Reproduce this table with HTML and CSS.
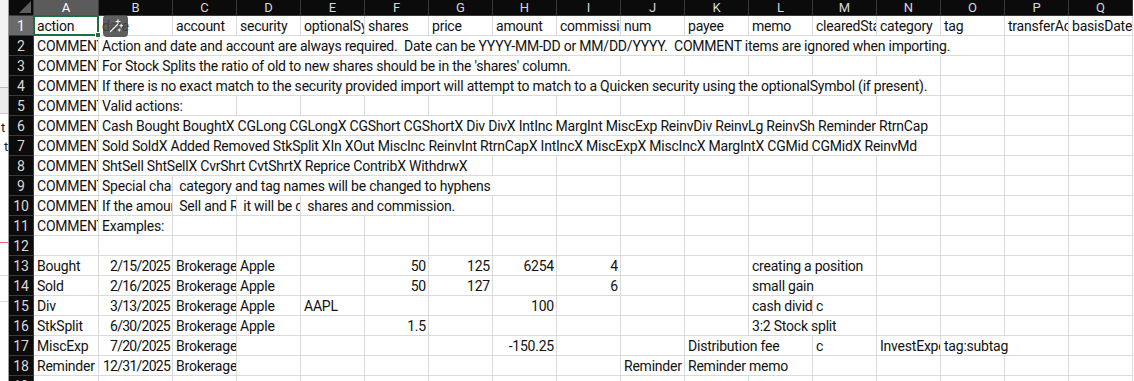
FILE: index.html
```html
<!DOCTYPE html>
<html>
<head>
<meta charset="utf-8">
<link rel="stylesheet" href="styles.css">
</head>
<body>
<div class="app">
  <div class="behind">
    <span class="bt bt1">t</span>
    <span class="bt bt2">t</span>
  </div>
  <div class="sheet">
    <div class="corner"><span class="tri"></span></div>
    <div class="ch sel">A</div><div class="ch">B</div><div class="ch">C</div><div class="ch">D</div><div class="ch">E</div><div class="ch">F</div><div class="ch">G</div><div class="ch">H</div><div class="ch">I</div><div class="ch">J</div><div class="ch">K</div><div class="ch">L</div><div class="ch">M</div><div class="ch">N</div><div class="ch">O</div><div class="ch">P</div><div class="ch">Q</div>

    <div class="rh sel">1</div>
    <div class="c active">action<span class="handle"></span></div><div class="c">date</div><div class="c">account</div><div class="c">security</div><div class="c">optionalSymbol</div><div class="c">shares</div><div class="c">price</div><div class="c">amount</div><div class="c">commission</div><div class="c">num</div><div class="c">payee</div><div class="c">memo</div><div class="c">clearedStatus</div><div class="c">category</div><div class="c">tag</div><div class="c">transferAccount</div><div class="c">basisDate</div>

    <div class="rh">2</div>
    <div class="c">COMMENT</div><div class="c s14">Action and date and account are always required.  Date can be YYYY-MM-DD or MM/DD/YYYY.  COMMENT items are ignored when importing.</div><div class="c"></div><div class="c"></div>

    <div class="rh">3</div>
    <div class="c">COMMENT</div><div class="c s8">For Stock Splits the ratio of old to new shares should be in the 'shares' column.</div><div class="c"></div><div class="c"></div><div class="c"></div><div class="c"></div><div class="c"></div><div class="c"></div><div class="c"></div><div class="c"></div>

    <div class="rh">4</div>
    <div class="c">COMMENT</div><div class="c s13">If there is no exact match to the security provided import will attempt to match to a Quicken security using the optionalSymbol (if present).</div><div class="c"></div><div class="c"></div><div class="c"></div>

    <div class="rh">5</div>
    <div class="c">COMMENT</div><div class="c s2">Valid actions:</div><div class="c"></div><div class="c"></div><div class="c"></div><div class="c"></div><div class="c"></div><div class="c"></div><div class="c"></div><div class="c"></div><div class="c"></div><div class="c"></div><div class="c"></div><div class="c"></div><div class="c"></div><div class="c"></div>

    <div class="rh">6</div>
    <div class="c">COMMENT</div><div class="c s13">Cash Bought BoughtX CGLong CGLongX CGShort CGShortX Div DivX IntInc MargInt MiscExp ReinvDiv ReinvLg ReinvSh Reminder RtrnCap</div><div class="c"></div><div class="c"></div><div class="c"></div>

    <div class="rh">7</div>
    <div class="c">COMMENT</div><div class="c s13">Sold SoldX Added Removed StkSplit XIn XOut MiscInc ReinvInt RtrnCapX IntIncX MiscExpX MiscIncX MargIntX CGMid CGMidX ReinvMd</div><div class="c"></div><div class="c"></div><div class="c"></div>

    <div class="rh">8</div>
    <div class="c">COMMENT</div><div class="c s6">ShtSell ShtSellX CvrShrt CvtShrtX Reprice ContribX WithdrwX</div><div class="c"></div><div class="c"></div><div class="c"></div><div class="c"></div><div class="c"></div><div class="c"></div><div class="c"></div><div class="c"></div><div class="c"></div><div class="c"></div>

    <div class="rh">9</div>
    <div class="c">COMMENT</div><div class="c">Special characters in account</div><div class="c s6"> category and tag names will be changed to hyphens</div><div class="c"></div><div class="c"></div><div class="c"></div><div class="c"></div><div class="c"></div><div class="c"></div><div class="c"></div><div class="c"></div><div class="c"></div>

    <div class="rh">10</div>
    <div class="c">COMMENT</div><div class="c">If the amount is missing for Buy</div><div class="c"> Sell and ReinvX</div><div class="c"> it will be calculated from price</div><div class="c s3"> shares and commission.</div><div class="c"></div><div class="c"></div><div class="c"></div><div class="c"></div><div class="c"></div><div class="c"></div><div class="c"></div><div class="c"></div><div class="c"></div><div class="c"></div>

    <div class="rh">11</div>
    <div class="c">COMMENT</div><div class="c">Examples:</div><div class="c"></div><div class="c"></div><div class="c"></div><div class="c"></div><div class="c"></div><div class="c"></div><div class="c"></div><div class="c"></div><div class="c"></div><div class="c"></div><div class="c"></div><div class="c"></div><div class="c"></div><div class="c"></div><div class="c"></div>

    <div class="rh">12</div>
    <div class="c"></div><div class="c"></div><div class="c"></div><div class="c"></div><div class="c"></div><div class="c"></div><div class="c"></div><div class="c"></div><div class="c"></div><div class="c"></div><div class="c"></div><div class="c"></div><div class="c"></div><div class="c"></div><div class="c"></div><div class="c"></div><div class="c"></div>

    <div class="rh">13</div>
    <div class="c">Bought</div><div class="c n d">2/15/2025</div><div class="c">Brokerage</div><div class="c">Apple</div><div class="c"></div><div class="c n">50</div><div class="c n">125</div><div class="c n">6254</div><div class="c n">4</div><div class="c"></div><div class="c"></div><div class="c s2">creating a position</div><div class="c"></div><div class="c"></div><div class="c"></div><div class="c"></div>

    <div class="rh">14</div>
    <div class="c">Sold</div><div class="c n d">2/16/2025</div><div class="c">Brokerage</div><div class="c">Apple</div><div class="c"></div><div class="c n">50</div><div class="c n">127</div><div class="c"></div><div class="c n">6</div><div class="c"></div><div class="c"></div><div class="c s2">small gain</div><div class="c"></div><div class="c"></div><div class="c"></div><div class="c"></div>

    <div class="rh">15</div>
    <div class="c">Div</div><div class="c n d">3/13/2025</div><div class="c">Brokerage</div><div class="c">Apple</div><div class="c">AAPL</div><div class="c"></div><div class="c"></div><div class="c n">100</div><div class="c"></div><div class="c"></div><div class="c"></div><div class="c">cash dividend</div><div class="c">c</div><div class="c"></div><div class="c"></div><div class="c"></div><div class="c"></div>

    <div class="rh">16</div>
    <div class="c">StkSplit</div><div class="c n d">6/30/2025</div><div class="c">Brokerage</div><div class="c">Apple</div><div class="c"></div><div class="c n">1.5</div><div class="c"></div><div class="c"></div><div class="c"></div><div class="c"></div><div class="c"></div><div class="c s2">3:2 Stock split</div><div class="c"></div><div class="c"></div><div class="c"></div><div class="c"></div>

    <div class="rh">17</div>
    <div class="c">MiscExp</div><div class="c n d">7/20/2025</div><div class="c">Brokerage</div><div class="c"></div><div class="c"></div><div class="c"></div><div class="c"></div><div class="c n">-150.25</div><div class="c"></div><div class="c"></div><div class="c s2">Distribution fee</div><div class="c">c</div><div class="c">InvestExpense</div><div class="c s2">tag:subtag</div><div class="c"></div>

    <div class="rh">18</div>
    <div class="c">Reminder</div><div class="c n d">12/31/2025</div><div class="c">Brokerage</div><div class="c"></div><div class="c"></div><div class="c"></div><div class="c"></div><div class="c"></div><div class="c"></div><div class="c">Reminder</div><div class="c s2">Reminder memo</div><div class="c"></div><div class="c"></div><div class="c"></div><div class="c"></div><div class="c"></div>

    <div class="rh">19</div>
    <div class="c"></div><div class="c"></div><div class="c"></div><div class="c"></div><div class="c"></div><div class="c"></div><div class="c"></div><div class="c"></div><div class="c"></div><div class="c"></div><div class="c"></div><div class="c"></div><div class="c"></div><div class="c"></div><div class="c"></div><div class="c"></div><div class="c"></div>

    <div class="spark">
      <svg width="16" height="16" viewBox="0 0 16 16" fill="none" stroke="#f2f2f2" stroke-width="1.3" stroke-linecap="round">
        <path d="M2.5 13.5 L9.5 6.5"/>
        <path d="M10 1.5 V5.5 M8 3.5 H12" stroke-width="1.1"/>
        <path d="M13.2 6.2 V9.2 M11.7 7.7 H14.7" stroke-width="1"/>
        <path d="M11.3 10.8 V13.2 M10.1 12 H12.5" stroke-width="1"/>
      </svg>
    </div>
  </div>
</div>
</body>
</html>
```

FILE: styles.css
```css
* { box-sizing: border-box; }
html, body {
  margin: 0;
  padding: 0;
  width: 1134px;
  height: 381px;
  overflow: hidden;
  background: #ffffff;
}
.app {
  display: flex;
  width: 1134px;
  height: 381px;
  font-family: Roboto, "Liberation Sans", Arial, sans-serif;
}
.behind {
  position: relative;
  width: 9px;
  flex: none;
  height: 381px;
  background:
    linear-gradient(#f3f3f3 0 87px, #bdbdbd 87px 88px, #ebebeb 88px 113px, #c8c8c8 113px 114px, #ffffff 114px 242px, #e06a6a 242px 243px, #ffffff 243px 275px, #dcdcdc 275px 276px, #ffffff 276px 301px, #dcdcdc 301px 302px, #ffffff 302px);
  border-right: 1px solid #9a9a9a;
}
.bt {
  position: absolute;
  font-size: 13px;
  color: #222;
}
.bt1 { left: 1px; top: 120px; }
.bt2 { left: 4px; top: 139px; }

.sheet {
  position: relative;
  display: grid;
  grid-template-columns: 25px 65px 74px repeat(15, 64px);
  grid-template-rows: 16px repeat(19, 20px);
  width: 1125px;
  overflow: hidden;
  font-size: 14px;
  letter-spacing: -0.22px;
  color: #111;
}
.corner {
  position: relative;
  background: #0b0b0b;
  border-right: 1px solid #3a3a3a;
  border-bottom: 1px solid #3a3a3a;
}
.tri {
  position: absolute;
  right: 2px;
  bottom: 2px;
  width: 0;
  height: 0;
  border-left: 12px solid transparent;
  border-bottom: 12px solid #5e5e5e;
}
.ch {
  background: #0b0b0b;
  color: #d8d8d8;
  font-size: 13px;
  line-height: 15px;
  letter-spacing: 0;
  text-align: center;
  border-right: 1px solid #3a3a3a;
  border-bottom: 1px solid #3a3a3a;
}
.ch.sel {
  background: #5b5b5b;
  color: #ffffff;
}
.rh {
  background: #0b0b0b;
  color: #d8d8d8;
  font-size: 14px;
  line-height: 19px;
  letter-spacing: 0;
  padding-top: 1px;
  text-align: center;
  border-bottom: 1px solid #3a3a3a;
  border-right: 1px solid #3a3a3a;
}
.rh.sel {
  background: #6a6a6a;
  color: #ffffff;
}
.c {
  position: relative;
  background: #ffffff;
  border-right: 1px solid #dadada;
  border-bottom: 1px solid #dadada;
  padding: 1px 2px 0 3px;
  line-height: 19px;
  white-space: pre;
  overflow: hidden;
}
.n { text-align: right; }
.d { letter-spacing: -0.75px; }
.s2 { grid-column: span 2; }
.s3 { grid-column: span 3; }
.s6 { grid-column: span 6; }
.s8 { grid-column: span 8; }
.s13 { grid-column: span 13; }
.s14 { grid-column: span 14; }

.active {
  overflow: visible;
  z-index: 2;
}
.active::before {
  content: "";
  position: absolute;
  left: -1px;
  top: -1px;
  right: -1px;
  bottom: -1px;
  border: 2px solid #1e6e42;
}
.handle {
  position: absolute;
  right: -3px;
  bottom: -3px;
  width: 6px;
  height: 6px;
  background: #1e6e42;
  border: 1px solid #ffffff;
}
.spark {
  position: absolute;
  left: 94px;
  top: 15px;
  width: 25px;
  height: 22px;
  border-radius: 4px;
  background: rgba(72, 72, 72, 0.88);
  display: flex;
  align-items: center;
  justify-content: center;
  z-index: 3;
}
```
